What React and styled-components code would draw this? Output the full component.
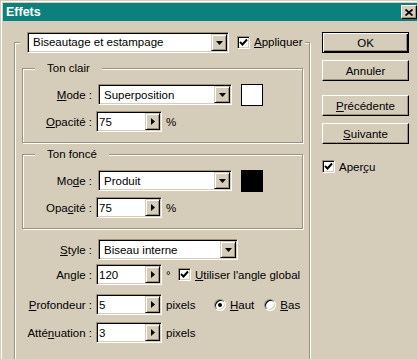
import React from 'react';
import styled, { createGlobalStyle } from 'styled-components';

const BG = '#d6ccba';
const SHADOW = '#9e9079';

const GlobalStyle = createGlobalStyle`
  html, body {
    margin: 0;
    padding: 0;
    background: ${BG};
    overflow: hidden;
  }
  body {
    font-family: "Liberation Sans", Arial, sans-serif;
    font-size: 11.5px;
    color: #000;
  }
`;

const Window = styled.div`
  width: 422px;
  height: 390px;
  box-sizing: border-box;
  padding: 3px;
  background: ${BG};
  box-shadow: inset 1px 1px 0 ${BG}, inset 2px 2px 0 #fff;
`;

const TitleBar = styled.div`
  height: 18px;
  display: flex;
  align-items: center;
  justify-content: space-between;
  padding: 0 2px 0 3px;
  background: #0b807c;
`;

const Title = styled.span`
  color: #fff;
  font-weight: bold;
  font-size: 12.5px;
`;

const CloseButton = styled.div`
  width: 16px;
  height: 14px;
  box-sizing: border-box;
  display: flex;
  align-items: center;
  justify-content: center;
  background: ${BG};
  border: 1px solid;
  border-color: #fff #000 #000 #fff;
  box-shadow: inset -1px -1px 0 ${SHADOW};
`;

const Body = styled.div`
  display: flex;
  gap: 12px;
  padding: 11px 0 0 11px;
`;

const Group = styled.fieldset`
  box-sizing: border-box;
  width: ${p => p.$w}px;
  margin: ${p => p.$mt || 0}px 0 0 0;
  padding: ${p => p.$pad};
  min-inline-size: 0;
  border: 1px solid ${SHADOW};
  box-shadow: inset 1px 1px 0 #fff, 1px 1px 0 #fff;
`;

const Legend = styled.legend`
  display: flex;
  align-items: center;
  margin-left: ${p => p.$ml}px;
  padding: ${p => p.$pad};
  line-height: 13px;
  background: ${BG};
`;

const Row = styled.div`
  display: flex;
  align-items: center;
  height: 21px;
  margin-top: ${p => p.$mt || 0}px;
`;

const Label = styled.span`
  flex: none;
  width: ${p => p.$w}px;
  text-align: right;
  white-space: nowrap;
`;

const U = styled.span`
  text-decoration: underline;
  text-underline-offset: 1px;
`;

const sunken = `
  box-sizing: border-box;
  background: #fff;
  border: 1px solid;
  border-color: ${SHADOW} #fff #fff ${SHADOW};
  box-shadow: inset 1px 1px 0 #000, inset -1px -1px 0 ${BG};
`;

const raised = `
  box-sizing: border-box;
  background: ${BG};
  border: 1px solid;
  border-color: ${BG} #000 #000 ${BG};
  box-shadow: inset 1px 1px 0 #fff, inset -1px -1px 0 ${SHADOW};
`;

const Combo = styled.div`
  ${sunken}
  flex: none;
  width: ${p => p.$w}px;
  height: 21px;
  margin-left: ${p => p.$ml || 0}px;
  display: flex;
  align-items: center;
  padding: 0 1px 0 5px;
`;

const ComboText = styled.span`
  flex: 1;
  white-space: nowrap;
`;

const ArrowButton = styled.div`
  ${raised}
  flex: none;
  width: ${p => p.$w}px;
  height: 17px;
  display: flex;
  align-items: center;
  justify-content: center;
`;

const Field = styled.div`
  ${sunken}
  flex: none;
  width: 66px;
  height: 21px;
  margin-left: 4px;
  display: flex;
  align-items: center;
  padding: 0 1px 0 2px;
`;

const FieldText = styled.span`
  flex: 1;
`;

const Unit = styled.span`
  flex: none;
  width: ${p => p.$w}px;
  margin-left: 4px;
  white-space: nowrap;
`;

const Swatch = styled.div`
  flex: none;
  width: 22px;
  height: 22px;
  box-sizing: border-box;
  margin-left: 9px;
  border: 1px solid #000;
  background: ${p => p.$color};
`;

const CheckBox = styled.div`
  ${sunken}
  flex: none;
  width: 13px;
  height: 13px;
  display: flex;
  align-items: center;
  justify-content: center;
  margin-left: ${p => p.$ml || 0}px;
`;

const Radio = styled.div`
  ${sunken}
  flex: none;
  width: 12px;
  height: 12px;
  border-radius: 50%;
  display: flex;
  align-items: center;
  justify-content: center;
  margin-left: ${p => p.$ml || 0}px;
`;

const Dot = styled.div`
  width: 4px;
  height: 4px;
  border-radius: 50%;
  background: #000;
`;

const OptionText = styled.span`
  margin-left: 4px;
  white-space: nowrap;
`;

const Side = styled.div`
  display: flex;
  flex-direction: column;
  width: 87px;
`;

const Button = styled.div`
  box-sizing: border-box;
  height: 21px;
  margin-top: ${p => p.$mt || 0}px;
  display: flex;
  align-items: center;
  justify-content: center;
  background: ${BG};
  border: 1px solid;
  border-color: ${p => (p.$default ? '#000' : '#fff #000 #000 #fff')};
  box-shadow: ${p =>
    p.$default
      ? `inset 1px 1px 0 #fff, inset -1px -1px 0 #000, inset -2px -2px 0 ${SHADOW}`
      : `inset -1px -1px 0 ${SHADOW}`};
`;

const CheckRow = styled.div`
  display: flex;
  align-items: center;
  margin-top: ${p => p.$mt || 0}px;
`;

const DownArrow = () => (
  <svg width="7" height="4" viewBox="0 0 7 4">
    <polygon points="0,0 7,0 3.5,4" fill="#000" />
  </svg>
);

const RightArrow = () => (
  <svg width="4" height="7" viewBox="0 0 4 7">
    <polygon points="0,0 4,3.5 0,7" fill="#000" />
  </svg>
);

const Check = () => (
  <svg width="9" height="9" viewBox="0 0 9 9">
    <path d="M1 4 L3.5 6.5 L8 1.5" fill="none" stroke="#000" strokeWidth="2" />
  </svg>
);

const CloseX = () => (
  <svg width="8" height="7" viewBox="0 0 8 7">
    <path d="M0.5 0.5 L7.5 6.5 M7.5 0.5 L0.5 6.5" stroke="#000" strokeWidth="1.7" />
  </svg>
);

const SelectBox = ({ w, ml, children }) => (
  <Combo $w={w} $ml={ml}>
    <ComboText>{children}</ComboText>
    <ArrowButton $w={16}>
      <DownArrow />
    </ArrowButton>
  </Combo>
);

const SpinField = ({ value }) => (
  <Field>
    <FieldText>{value}</FieldText>
    <ArrowButton $w={15}>
      <RightArrow />
    </ArrowButton>
  </Field>
);

const ToneGroup = ({ title, mode, modeLabel, opLabel, color, mt }) => (
  <Group $w={281} $mt={mt} $pad="9px 0 10px 0">
    <Legend $ml={12} $pad="0 12px">{title}</Legend>
    <Row>
      <Label $w={69}>{modeLabel}</Label>
      <SelectBox w={134} ml={6}>{mode}</SelectBox>
      <Swatch $color={color} />
    </Row>
    <Row $mt={6}>
      <Label $w={69}>{opLabel}</Label>
      <SpinField value="75" />
      <Unit>%</Unit>
    </Row>
  </Group>
);

export default function App() {
  return (
    <>
      <GlobalStyle />
      <Window>
        <TitleBar>
          <Title>Effets</Title>
          <CloseButton>
            <CloseX />
          </CloseButton>
        </TitleBar>
        <Body>
          <Group $w={296} $pad="9px 6px 40px 7px">
            <Legend $ml={-2} $pad="0 2px 0 7px">
              <SelectBox w={202}>Biseautage et estampage</SelectBox>
              <CheckBox $ml={8}>
                <Check />
              </CheckBox>
              <OptionText>
                <U>A</U>ppliquer
              </OptionText>
            </Legend>

            <ToneGroup
              title="Ton clair"
              modeLabel={<><U>M</U>ode :</>}
              opLabel={<><U>O</U>pacité :</>}
              mode="Superposition"
              color="#fff"
            />
            <ToneGroup
              title="Ton foncé"
              mt={5}
              modeLabel={<>Mo<U>d</U>e :</>}
              opLabel={<>Opa<U>c</U>ité :</>}
              mode="Produit"
              color="#000"
            />

            <Row $mt={10}>
              <Label $w={70}><U>S</U>tyle :</Label>
              <SelectBox w={140} ml={6}>Biseau interne</SelectBox>
            </Row>
            <Row $mt={4}>
              <Label $w={70}>Angle :</Label>
              <SpinField value="120" />
              <Unit $w={12}>°</Unit>
              <CheckBox>
                <Check />
              </CheckBox>
              <OptionText>
                <U>U</U>tiliser l'angle global
              </OptionText>
            </Row>
            <Row $mt={9}>
              <Label $w={70}><U>P</U>rofondeur :</Label>
              <SpinField value="5" />
              <Unit $w={48}>pixels</Unit>
              <Radio>
                <Dot />
              </Radio>
              <OptionText>
                <U>H</U>aut
              </OptionText>
              <Radio $ml={10} />
              <OptionText>
                <U>B</U>as
              </OptionText>
            </Row>
            <Row $mt={7}>
              <Label $w={70}>Atté<U>n</U>uation :</Label>
              <SpinField value="3" />
              <Unit>pixels</Unit>
            </Row>
          </Group>

          <Side>
            <Button $default>OK</Button>
            <Button $mt={7}>Annuler</Button>
            <Button $mt={14}>
              <span><U>P</U>récédente</span>
            </Button>
            <Button $mt={7}>
              <span><U>S</U>uivante</span>
            </Button>
            <CheckRow $mt={16}>
              <CheckBox>
                <Check />
              </CheckBox>
              <OptionText>
                Aper<U>ç</U>u
              </OptionText>
            </CheckRow>
          </Side>
        </Body>
      </Window>
    </>
  );
}
